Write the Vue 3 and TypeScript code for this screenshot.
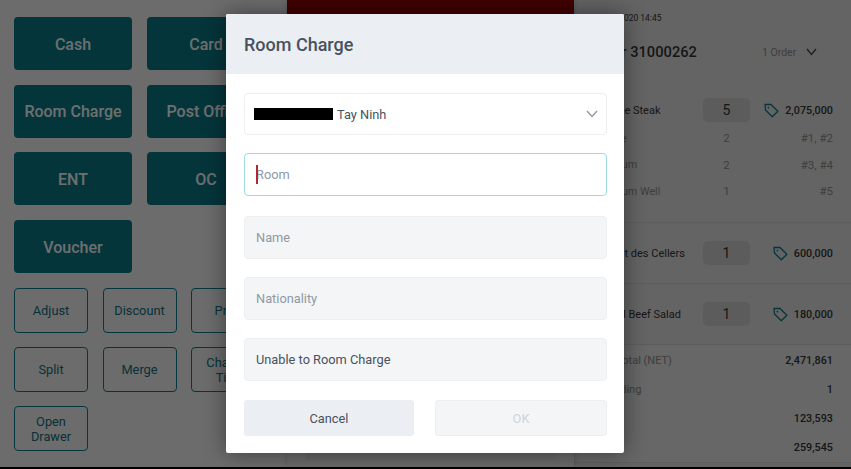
<script setup lang="ts">
const bigButtons = ['Cash', 'Card', 'Room Charge', 'Post Office', 'ENT', 'OC', 'Voucher']
const smallButtons = ['Adjust', 'Discount', 'Print', 'Split', 'Merge', 'Change Tips', 'Open Drawer']

const items = [
  {
    name: 'Entree Steak',
    qty: 5,
    price: '2,075,000',
    subs: [
      { name: 'Grade', qty: 2, ref: '#1, #2' },
      { name: 'Medium', qty: 2, ref: '#3, #4' },
      { name: 'Medium Well', qty: 1, ref: '#5' }
    ]
  },
  { name: 'Crédit des Cellers', qty: 1, price: '600,000', subs: [] },
  { name: 'Royal Beef Salad', qty: 1, price: '180,000', subs: [] }
]

const totals = [
  { label: 'Sub Total (NET)', value: '2,471,861' },
  { label: 'Rounding', value: '1' },
  { label: 'SVC', value: '123,593' },
  { label: 'VAT', value: '259,545' }
]
</script>

<template>
  <div class="screen">
    <section class="pay-panel">
      <div class="big-grid">
        <button v-for="b in bigButtons" :key="b" class="big-btn">{{ b }}</button>
      </div>
      <div class="small-grid">
        <button v-for="b in smallButtons" :key="b" class="small-btn">{{ b }}</button>
      </div>
    </section>

    <section class="mid-panel">
      <div class="red-block"></div>
      <div class="mid-bar"></div>
    </section>

    <section class="order-panel">
      <div class="stamp">01/01/2020 14:45</div>
      <div class="order-head">
        <span class="order-no">Order 31000262</span>
        <span class="order-count">1 Order</span>
        <svg class="order-chevron" width="11" height="8" viewBox="0 0 11 8">
          <path d="M1 1l4.5 5.5L10 1" fill="none" stroke="currentColor" stroke-width="1.3" />
        </svg>
      </div>

      <div v-for="item in items" :key="item.name" class="item" :class="{ 'has-subs': item.subs.length }">
        <div class="item-row">
          <span class="item-name">{{ item.name }}</span>
          <span class="qty-pill">{{ item.qty }}</span>
          <span class="item-price">
            <svg class="tag" width="15" height="15" viewBox="0 0 15 15">
              <path d="M1 1.5h6l6.8 6.8-5.5 5.5L1.5 7z" fill="none" stroke="currentColor" stroke-width="1.3" stroke-linejoin="round" />
              <circle cx="4.4" cy="4.6" r=".9" fill="currentColor" />
            </svg>
            {{ item.price }}
          </span>
        </div>
        <div v-for="sub in item.subs" :key="sub.name" class="sub-row">
          <span class="item-name">{{ sub.name }}</span>
          <span class="sub-qty">{{ sub.qty }}</span>
          <span class="sub-ref">{{ sub.ref }}</span>
        </div>
      </div>

      <div class="totals">
        <div v-for="t in totals" :key="t.label" class="total-row">
          <span class="total-label">{{ t.label }}</span>
          <span class="total-value">{{ t.value }}</span>
        </div>
      </div>
    </section>

    <div class="overlay">
      <div class="modal">
        <header class="modal-head">Room Charge</header>
        <div class="modal-body">
          <div class="field select-field">
            <span class="redacted"></span>
            <span>Tay Ninh</span>
            <svg class="select-chevron" width="12" height="8" viewBox="0 0 12 8">
              <path d="M1 1l5 5.5L11 1" fill="none" stroke="currentColor" stroke-width="1.4" />
            </svg>
          </div>
          <div class="field focus-field">
            <span class="caret"></span>
            <span class="placeholder">Room</span>
          </div>
          <div class="field filled-field"><span class="placeholder">Name</span></div>
          <div class="field filled-field"><span class="placeholder">Nationality</span></div>
          <div class="field filled-field last-field">Unable to Room Charge</div>
          <div class="modal-actions">
            <button class="cancel-btn">Cancel</button>
            <button class="ok-btn" disabled>OK</button>
          </div>
        </div>
      </div>
    </div>
  </div>
</template>

<style>
html,
body {
  margin: 0;
  background: #000;
}
</style>

<style scoped>
.screen {
  position: relative;
  display: flex;
  width: 851px;
  height: 467px;
  overflow: hidden;
  font-family: Roboto, "Liberation Sans", sans-serif;
  background: #f0f0f0;
}

button {
  font-family: inherit;
  margin: 0;
  padding: 0;
}

.pay-panel {
  width: 287px;
  flex: none;
  box-sizing: border-box;
  padding: 17px 0 0 14px;
}

.big-grid {
  display: grid;
  grid-template-columns: 118px 118px;
  grid-auto-rows: 53px;
  column-gap: 15px;
  row-gap: 14.7px;
}

.big-btn {
  padding-top: 1px;
  border: none;
  border-radius: 4px;
  background: #0a7683;
  color: #f2f5f5;
  font-size: 16px;
  font-weight: 500;
}

.small-grid {
  display: grid;
  grid-template-columns: repeat(3, 74px);
  grid-auto-rows: 45px;
  column-gap: 14.5px;
  row-gap: 14px;
  margin-top: 15px;
}

.small-btn {
  padding: 0 8px;
  border: 1px solid #0e7a88;
  border-radius: 4px;
  background: transparent;
  color: #0e6e7b;
  font-size: 12.8px;
  line-height: 15px;
}

.mid-panel {
  display: flex;
  flex-direction: column;
  align-items: center;
  justify-content: space-between;
  width: 287px;
  flex: none;
  padding-bottom: 7px;
  box-sizing: border-box;
  background: #e8e8e8;
  box-shadow: 0 0 5px rgba(0, 0, 0, 0.2);
  z-index: 1;
}

.red-block {
  align-self: stretch;
  height: 40px;
  background: #8e0000;
}

.mid-bar {
  width: 250px;
  height: 30px;
  background: #e0e0e0;
}

.order-panel {
  flex: 1;
  min-width: 0;
  box-sizing: border-box;
  padding-top: 13px;
  background: #dedede;
  color: #333;
}

.stamp {
  height: 11px;
  padding-left: 19px;
  font-size: 8.5px;
  line-height: 11px;
  white-space: nowrap;
}

.order-head {
  display: flex;
  align-items: center;
  height: 20px;
  margin-top: 18px;
  padding-left: 16px;
}

.order-no {
  width: 172px;
  font-size: 14.7px;
  font-weight: 500;
  white-space: nowrap;
}

.order-count {
  color: #8a8a8a;
  font-size: 10.5px;
}

.order-chevron {
  margin-left: 10px;
  color: #444;
}

.item {
  padding: 18px 18px 18px 24px;
  border-bottom: 1px solid #cfcfcf;
}

.item.has-subs {
  padding-top: 36px;
  padding-bottom: 17.5px;
}

.item-row,
.sub-row {
  display: flex;
  align-items: center;
  font-size: 10.8px;
}

.item-row {
  height: 24px;
}

.sub-row {
  height: 26.5px;
  color: #8a8a8a;
}

.item-row + .sub-row {
  margin-top: 3px;
}

.item-name {
  width: 105px;
  flex: none;
  box-sizing: border-box;
  white-space: nowrap;
}

.item-row .item-name {
  padding-left: 1px;
  font-size: 11px;
}

.qty-pill {
  width: 47px;
  height: 24px;
  flex: none;
  border-radius: 5px;
  background: #cccccc;
  font-size: 14px;
  line-height: 24px;
  text-align: center;
}

.item-price {
  display: flex;
  align-items: center;
  justify-content: flex-end;
  gap: 6px;
  flex: 1;
  font-weight: 500;
}

.tag {
  color: #0a7683;
}

.sub-qty {
  width: 47px;
  flex: none;
  font-size: 11.5px;
  text-align: center;
}

.sub-ref {
  flex: 1;
  font-size: 11.5px;
  text-align: right;
}

.totals {
  padding: 1px 18px 0 21px;
  border-bottom: 1px solid #cfcfcf;
  background: #e4e4e4;
}

.total-row {
  display: flex;
  justify-content: space-between;
  align-items: center;
  height: 29px;
  font-size: 10.8px;
}

.total-label {
  color: #8a8a8a;
  font-size: 11px;
}

.total-value {
  font-weight: 500;
}

.overlay {
  position: absolute;
  inset: 0;
  z-index: 2;
  background: rgba(0, 0, 0, 0.55);
}

.modal {
  position: absolute;
  left: 226px;
  top: 14px;
  width: 398px;
  height: 439px;
  border-radius: 2px;
  overflow: hidden;
  background: #fff;
  box-shadow: 0 0 22px rgba(0, 0, 0, 0.45);
}

.modal-head {
  height: 60px;
  box-sizing: border-box;
  padding-left: 18px;
  background: #ebeff3;
  color: #48525e;
  font-size: 18px;
  font-weight: 500;
  line-height: 61px;
}

.modal-body {
  display: flex;
  flex-direction: column;
  padding: 19px 17px 0 18px;
}

.field {
  display: flex;
  align-items: center;
  height: 43px;
  box-sizing: border-box;
  padding-left: 11px;
  border: 1px solid #eceef0;
  border-radius: 4px;
  color: #48525e;
  font-size: 12.8px;
}

.select-field {
  height: 42px;
  margin-bottom: 18px;
}

.redacted {
  width: 79px;
  height: 12px;
  margin: 0 4px 0 -2px;
  background: #000;
}

.select-chevron {
  margin-left: auto;
  margin-right: 8px;
  margin-bottom: 1px;
  color: #8f99a3;
}

.focus-field {
  position: relative;
  margin-bottom: 20px;
  border-color: #9fdbe3;
}

.caret {
  position: absolute;
  left: 11px;
  top: 11px;
  width: 2px;
  height: 19px;
  background: #b3272d;
}

.filled-field {
  margin-bottom: 18px;
  background: #f4f5f7;
}

.last-field {
  margin-bottom: 19px;
}

.placeholder {
  color: #8f99a3;
}

.modal-actions {
  display: flex;
  justify-content: space-between;
}

.cancel-btn,
.ok-btn {
  height: 36px;
  border-radius: 3px;
  font-size: 12.8px;
}

.cancel-btn {
  width: 170px;
  border: none;
  background: #ebeff3;
  color: #48525e;
}

.ok-btn {
  width: 172px;
  border: 1px solid #eceef0;
  background: #f4f5f7;
  color: #ced4da;
}
</style>
